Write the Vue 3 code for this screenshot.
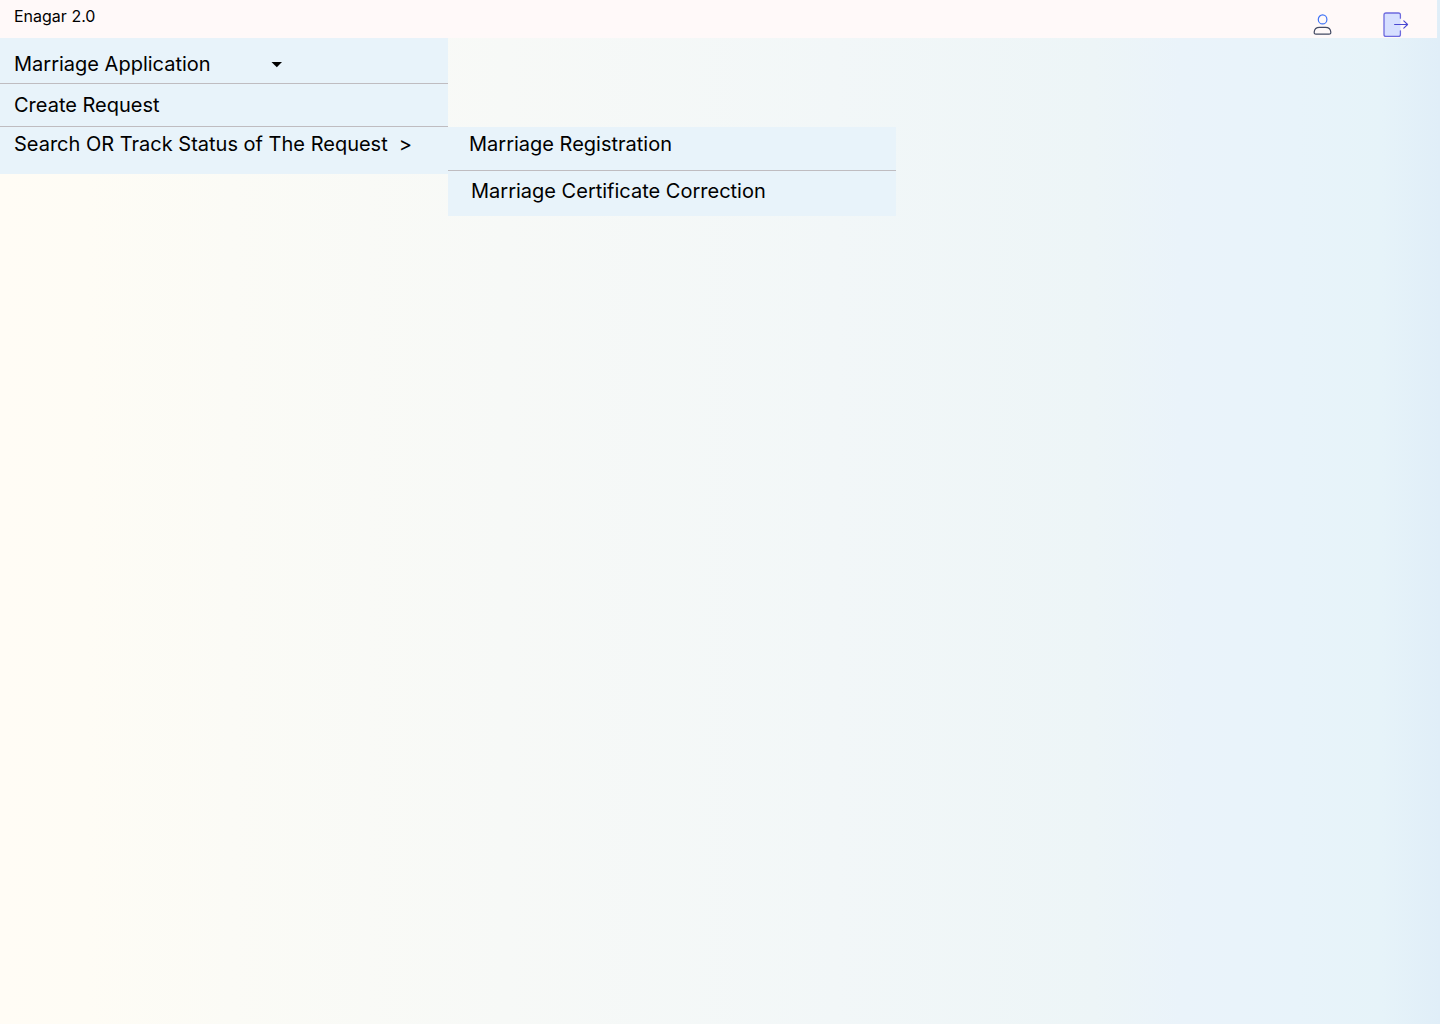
<script setup>
import { ref } from 'vue'

const menuOpen = ref(true)
const trackOpen = ref(true)
</script>

<template>
  <div class="page">
    <header class="topbar">
      <h1 class="brand">Enagar 2.0</h1>
      <div class="actions">
        <button class="icon-button" type="button" aria-label="Profile">
          <svg width="20" height="22" viewBox="0 0 20 22" fill="none" stroke-width="1.2">
            <ellipse cx="9.6" cy="5.4" rx="4.3" ry="4.5" stroke="#3f73f6" />
            <path d="M3 20.2Q1 20.2 1.2 18Q1.6 13.4 6.5 13.4H12.5Q17.4 13.4 17.8 18Q18 20.2 16 20.2Z" stroke="#434a63" />
          </svg>
        </button>
        <button class="icon-button" type="button" aria-label="Log out">
          <svg width="26" height="26" viewBox="0 0 26 26" fill="none" stroke-linecap="round" stroke-linejoin="round">
            <path d="M17.5 7V3Q17.5 1 15.5 1H3Q1 1 1 3V22.4Q1 24.4 3 24.4H15.5Q17.5 24.4 17.5 22.4V19Z" fill="#d6dfff" />
            <path d="M17.4 6.2V3Q17.4 1 15.4 1H3Q1 1 1 3V22.4Q1 24.4 3 24.4H15.4Q17.4 24.4 17.4 22.4V18.8" stroke="#6d6ade" stroke-width="1.3" />
            <path d="M11.6 12.5H24.4M20.8 8.8L24.6 12.5L20.8 16.2" stroke="#4a48d2" stroke-width="1.1" />
          </svg>
        </button>
      </div>
    </header>

    <nav class="menu" aria-label="Marriage Application">
      <button class="item heading" type="button" :aria-expanded="menuOpen" @click="menuOpen = !menuOpen">
        Marriage Application
        <svg class="caret" width="12" height="8" viewBox="0 0 12 8"><path d="M0.5 2H11L5.8 7.3Z" fill="#000" /></svg>
      </button>
      <template v-if="menuOpen">
        <a class="item create" href="#create">Create Request</a>
        <div class="track-row">
          <button class="item track" type="button" :aria-expanded="trackOpen" @click="trackOpen = !trackOpen">
            <span>Search OR Track Status of The Request</span>
            <span>&gt;</span>
          </button>
          <div v-if="trackOpen" class="submenu">
            <a class="item registration" href="#registration">Marriage Registration</a>
            <a class="item correction" href="#correction">Marriage Certificate Correction</a>
          </div>
        </div>
      </template>
    </nav>
  </div>
</template>

<style>
body {
  margin: 0;
}
</style>

<style scoped>
.page {
  box-sizing: border-box;
  min-height: 100vh;
  font-family: Inter, "Liberation Sans", sans-serif;
  color: #000;
  background: linear-gradient(90deg, #fffcf5 0%, #fefcf5 6%, #fbfbf6 16%, #f7f9f7 35%, #f2f7f8 58%, #edf5f7 76%, #eaf3fa 82%, #e8f3fa 90%, #e6f3f9 96%, #e0eef8 100%);
}

.topbar {
  display: flex;
  justify-content: space-between;
  box-sizing: border-box;
  height: 38px;
  margin-right: 3px;
  padding: 6px 28px 0 14px;
  background: #fff9f9;
}

.brand {
  margin: 0;
  font-size: 16px;
  font-weight: 400;
  line-height: 20px;
}

.actions {
  display: flex;
  align-items: flex-start;
  gap: 50px;
  padding-top: 5px;
}

.icon-button {
  display: flex;
  align-items: center;
  height: 28px;
  padding: 0;
  border: 0;
  background: none;
  cursor: pointer;
}

.icon-button svg {
  display: block;
}

.menu {
  width: 448px;
}

.item {
  display: flex;
  align-items: center;
  box-sizing: border-box;
  width: 100%;
  border: 0;
  border-bottom: 1px solid #bfbcc0;
  background: #e8f3fa;
  color: inherit;
  font-family: inherit;
  font-size: 20px;
  font-weight: 400;
  line-height: 24px;
  text-align: left;
  text-decoration: none;
  white-space: nowrap;
  cursor: pointer;
}

.heading {
  gap: 60px;
  padding: 14px 14px 7px;
}

.create {
  padding: 9px 14px;
}

.track-row {
  position: relative;
}

.track {
  gap: 11px;
  padding: 5px 14px 18px;
  border-bottom: 0;
}

.submenu {
  position: absolute;
  top: 0;
  left: 100%;
  width: 100%;
}

.registration {
  padding: 5px 21px 14px;
}

.correction {
  padding: 8px 23px 13px;
  border-bottom: 0;
}
</style>
